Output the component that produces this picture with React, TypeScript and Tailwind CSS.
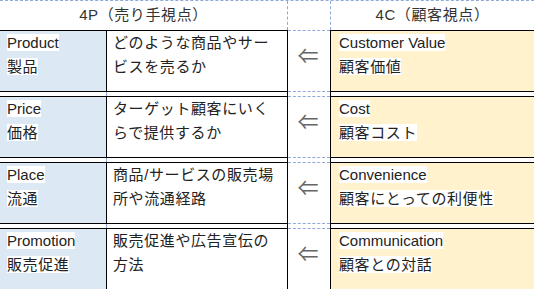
import React from "react";

const rows = [
  { en: "Product", ja: "製品", desc: ["どのような商品やサー", "ビスを売るか"], cen: "Customer Value", cja: "顧客価値" },
  { en: "Price", ja: "価格", desc: ["ターゲット顧客にいく", "らで提供するか"], cen: "Cost", cja: "顧客コスト" },
  { en: "Place", ja: "流通", desc: ["商品/サービスの販売場", "所や流通経路"], cen: "Convenience", cja: "顧客にとっての利便性" },
  { en: "Promotion", ja: "販売促進", desc: ["販売促進や広告宣伝の", "方法"], cen: "Communication", cja: "顧客との対話" },
];

function Gap() {
  return (
    <div className="flex h-[4px]">
      <div className="flex w-[288px] border-r border-black">
        <div className="w-[107px] border-r border-dashed border-[#8ea9d8]" />
      </div>
      <div className="w-[42px]" />
      <div className="flex-1 border-l border-black" />
    </div>
  );
}

function Row({ r }: { r: (typeof rows)[number] }) {
  return (
    <div className="flex h-[62px]">
      <div className="flex w-[288px] border-y border-r border-black">
        <div className="w-[107px] border-r border-black bg-[#dde8f5] pl-[7px]">
          <div className="leading-[24px]"><span className="bg-white">{r.en}</span></div>
          <div className="leading-[24px] tracking-[0.6px]"><span className="bg-white">{r.ja}</span></div>
        </div>
        <div className="flex-1 pl-[6px] tracking-[0.6px]">
          {r.desc.map((d) => (
            <div key={d} className="whitespace-nowrap leading-[24px]">{d}</div>
          ))}
        </div>
      </div>
      <div className="flex w-[42px] justify-center border-y border-dashed border-[#8ea9d8] pt-[11px] pr-[2px]">
        <span className="font-['Noto_Sans_CJK_JP',sans-serif] text-[21px] leading-[24px] text-[#666]">⇐</span>
      </div>
      <div className="flex-1 border-y border-l border-black bg-[#fff2cc] pl-[8px]">
        <div className="leading-[24px]"><span className="bg-white">{r.cen}</span></div>
        <div className="leading-[24px] tracking-[0.6px]"><span className="bg-white">{r.cja}</span></div>
      </div>
    </div>
  );
}

export default function App() {
  return (
    <div className="h-[289px] w-[534px] overflow-hidden bg-white font-['Liberation_Sans','Noto_Sans_CJK_JP',sans-serif] text-[15px] text-[#222]">
      <div className="flex h-[30px] border-t border-dashed border-[#8ea9d8]">
        <div className="flex w-[288px] items-center justify-center border-r border-dashed border-[#8ea9d8] tracking-[0.6px] text-[#333]">
          4P（売り手視点）
        </div>
        <div className="w-[42px]" />
        <div className="flex flex-1 items-center justify-center border-l border-dashed border-[#8ea9d8] tracking-[0.6px] text-[#333]">
          4C（顧客視点）
        </div>
      </div>
      {rows.map((r, i) => (
        <React.Fragment key={r.en}>
          {i > 0 && <Gap />}
          <Row r={r} />
        </React.Fragment>
      ))}
    </div>
  );
}
